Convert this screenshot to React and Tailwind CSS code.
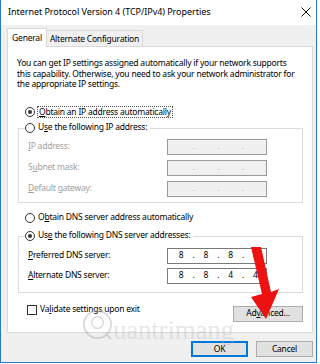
import React from 'react';

function Radio({ checked }) {
  return (
    <span className="w-[10px] h-[10px] rounded-full border border-[#333] bg-white flex items-center justify-center shrink-0">
      {checked && <span className="w-[4px] h-[4px] rounded-full bg-[#333]" />}
    </span>
  );
}

function IpBox({ parts, disabled }) {
  const cells = [];
  for (let i = 0; i < 4; i++) {
    cells.push(<span key={'p' + i} className="w-[12.4px] text-center">{parts ? parts[i] : ''}</span>);
    if (i < 3) cells.push(<span key={'d' + i} className="w-[12.4px] text-center">.</span>);
  }
  return (
    <div
      className={
        'w-[100px] h-[16px] flex items-center pl-[7px] border tracking-normal ' +
        (disabled ? 'bg-[#f0f0f0] border-[#9a9a9a] text-[#a8a8a8]' : 'bg-white border-[#7a7a7a] text-black')
      }
    >
      {cells}
    </div>
  );
}

function Field({ children, parts, disabled }) {
  return (
    <div className="flex items-center h-[16px]">
      <span className={'w-[139px] ' + (disabled ? 'text-[#a0a0a0]' : 'text-black')}>{children}</span>
      <IpBox parts={parts} disabled={disabled} />
    </div>
  );
}

export default function App() {
  return (
    <div className="w-[320px] h-[364px] bg-white font-['Segoe_UI','Noto_Sans',sans-serif] text-[8.5px] tracking-[-0.22px] leading-[10.5px] text-black">
      <div className="relative w-[317px] h-[363px] border-x border-b border-[#2b79c2] bg-[#f0f0f0] flex flex-col">
        {/* title bar */}
        <div className="h-[25px] bg-white flex items-center justify-between pl-[7px] pr-[5px]">
          <span className="text-[9px] tracking-[-0.05px]">Internet Protocol Version 4 (TCP/IPv4) Properties</span>
          <svg width="10" height="10" viewBox="0 0 10 10" className="mt-[-1px]">
            <path d="M0.5 0.5 L9.5 9.5 M9.5 0.5 L0.5 9.5" stroke="#111" strokeWidth="1" />
          </svg>
        </div>

        {/* tabs */}
        <div className="flex items-end pt-[3px] pl-[6px]">
          <div className="h-[19px] w-[40px] bg-white border-t border-x border-[#d9d9d9] -mb-px relative z-10 flex items-center justify-center">
            General
          </div>
          <div className="h-[16px] w-[96px] border-t border-r border-[#d9d9d9] flex items-center justify-center pt-[1px]">
            Alternate Configuration
          </div>
        </div>

        {/* panel */}
        <div className="ml-[6px] w-[306px] h-[287px] bg-white border border-[#d9d9d9] pl-[9px] flex flex-col">
          <p className="mt-[11px] w-[285px]">
            You can get IP settings assigned automatically if your network supports this capability. Otherwise, you need to ask your network administrator for the appropriate IP settings.
          </p>

          <div className="mt-[15px] ml-[8px] h-[14px] flex items-center gap-[2px]">
            <Radio checked />
            <span className="border border-dotted border-[#555] px-[1px] leading-[10px]">
              <u>O</u>btain an IP address automatically
            </span>
          </div>

          <div className="mt-[9px] ml-[1px] w-[285px] border border-[#dcdcdc] flex flex-col pb-[5px]">
            <div className="-mt-[8px] ml-[6px] h-[14px] w-fit bg-white pr-[3px] flex items-center gap-[3px]">
              <Radio />
              <span>U<u>s</u>e the following IP address:</span>
            </div>
            <div className="mt-[4px] pl-[9px] flex flex-col gap-[5px]">
              <Field disabled><u>I</u>P address:</Field>
              <Field disabled>S<u>u</u>bnet mask:</Field>
              <Field disabled><u>D</u>efault gateway:</Field>
            </div>
          </div>

          <div className="mt-[8px] ml-[8px] h-[14px] flex items-center gap-[3px]">
            <Radio />
            <span>O<u>b</u>tain DNS server address automatically</span>
          </div>

          <div className="mt-[11px] ml-[1px] w-[285px] border border-[#dcdcdc] flex flex-col pb-[8px]">
            <div className="-mt-[8px] ml-[6px] h-[14px] w-fit bg-white pr-[3px] flex items-center gap-[3px]">
              <Radio checked />
              <span>Us<u>e</u> the following DNS server addresses:</span>
            </div>
            <div className="mt-[5px] pl-[9px] flex flex-col gap-[4px]">
              <Field parts={['8', '8', '8', '8']}><u>P</u>referred DNS server:</Field>
              <Field parts={['8', '8', '4', '4']}><u>A</u>lternate DNS server:</Field>
            </div>
          </div>

          <div className="mt-[13px] flex items-start justify-between w-[286px]">
            <div className="-mt-[1px] ml-[10px] h-[10px] flex items-center gap-[3px]">
              <span className="w-[10px] h-[10px] border border-[#333] bg-white" />
              <span>Va<u>l</u>idate settings upon exit</span>
            </div>
            <button className="w-[70px] h-[16px] bg-[#e1e1e1] border border-[#adadad] flex items-center justify-center">
              Ad<u>v</u>anced...
            </button>
          </div>
        </div>

        {/* bottom buttons */}
        <div className="mt-[8px] flex justify-end gap-[8px] pr-[3px]">
          <button className="w-[57px] h-[16px] bg-[#e1e1e1] border-2 border-[#0078d7] flex items-center justify-center">
            OK
          </button>
          <button className="w-[57px] h-[16px] bg-[#e1e1e1] border border-[#adadad] flex items-center justify-center">
            Cancel
          </button>
        </div>

        {/* watermark */}
        <div className="absolute left-[81px] top-[309px] flex items-end pointer-events-none opacity-35">
          <svg width="31" height="31" viewBox="0 0 32 32">
            <circle cx="16" cy="16" r="14" fill="none" stroke="#9a9a9a" strokeWidth="2" />
            <circle cx="16" cy="14" r="6" fill="none" stroke="#9a9a9a" strokeWidth="1.5" />
            <path d="M24 25 L30 31" stroke="#9a9a9a" strokeWidth="2" />
          </svg>
          <span className="font-['Liberation_Serif',serif] text-[27px] leading-[20px] text-[#bdbdbd]">uantrimang</span>
        </div>

        {/* red arrow */}
        <svg className="absolute left-0 top-0 pointer-events-none" width="320" height="364" viewBox="0 0 320 364">
          <polygon points="250,247 260,247 270,292 278,289 265,319 250,297 261,294" fill="#ee1111" />
        </svg>
      </div>
    </div>
  );
}
